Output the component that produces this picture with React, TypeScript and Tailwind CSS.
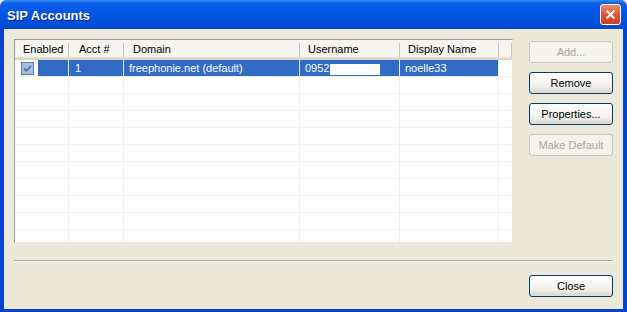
import React from "react";

const cols = [
  { name: "Enabled", w: "w-[54px]", pl: "pl-[8px]" },
  { name: "Acct #", w: "w-[55px]", pl: "pl-[10px]" },
  { name: "Domain", w: "w-[176px]", pl: "pl-[9px]" },
  { name: "Username", w: "w-[100px]", pl: "pl-[8px]" },
  { name: "Display Name", w: "w-[99px]", pl: "pl-[8px]" },
  { name: "", w: "w-[13px]", pl: "pl-0" },
];

function XpButton({ label, disabled }: { label: string; disabled?: boolean }) {
  if (disabled) {
    return (
      <button disabled className="h-[22px] w-[84px] rounded-[3px] border border-[#C9C7BA] bg-[#F5F4EA] text-[11px] text-[#ACA899]">
        {label}
      </button>
    );
  }
  return (
    <button className="h-[22px] w-[84px] rounded-[3px] border border-[#003C74] bg-[linear-gradient(#FFFFFF,#F0F0EA_70%,#D6D0C5)] text-[11px] text-black shadow-[inset_0_-1px_0_#E3E0D2]">
      {label}
    </button>
  );
}

function CheckBox() {
  return (
    <div className="flex h-[13px] w-[13px] items-center justify-center border border-[#5A7EA6] bg-[#A9BFDB]">
      <svg width="9" height="9" viewBox="0 0 9 9">
        <path d="M1 4.5 L3.5 7 L8 1.8" stroke="#3D7BA8" strokeWidth="1.8" fill="none" />
      </svg>
    </div>
  );
}

export default function App() {
  const emptyRows = Array.from({ length: 10 });

  return (
    <div className="h-[312px] w-[627px] overflow-hidden bg-[#ECE9D8]" style={{ fontFamily: '"Liberation Sans", Arial, sans-serif' }}>
      <div className="flex h-full flex-col rounded-t-[7px] bg-[#0842D0]">
        {/* title bar */}
        <div className="flex h-[29px] shrink-0 items-center justify-between rounded-t-[7px] bg-[linear-gradient(#3A8CF9_0%,#0A5FE9_12%,#0256E4_45%,#0050DD_75%,#0047CC_100%)] pl-[7px] pr-[6px]">
          <span className="mt-[2px] text-[13px] font-bold text-white [text-shadow:1px_1px_0_#0A1E8C]">SIP Accounts</span>
          <div className="flex h-[21px] w-[21px] items-center justify-center rounded-[3px] border border-white bg-[linear-gradient(#E98B6B,#DD5632_50%,#C8401E)]">
            <svg width="11" height="11" viewBox="0 0 11 11">
              <path d="M1.5 1.5 L9.5 9.5 M9.5 1.5 L1.5 9.5" stroke="white" strokeWidth="2" />
            </svg>
          </div>
        </div>

        {/* client area */}
        <div className="mx-[4px] mb-[3px] flex flex-1 flex-col bg-[#ECE9D8] pl-[10px] pr-[10px] pt-[10px]">
          <div className="flex gap-[16px]">
            {/* list view */}
            <div className="h-[204px] w-[499px] overflow-hidden border border-[#9A9A9E] border-r-[#ECE9D8] border-b-[#ECE9D8] bg-white text-[11px] text-black">
              <div className="flex h-[20px] border-b border-b-[#D6D2C2] bg-[#F6F5EF] shadow-[inset_0_-2px_0_#E2DECD]">
                {cols.map((c, i) => (
                  <div key={i} className={`${c.w} ${c.pl} relative flex h-full shrink-0 items-center`}>
                    {c.name}
                    <span className="absolute right-0 top-[3px] h-[14px] w-[1px] bg-[#C7C5B2]" />
                  </div>
                ))}
              </div>

              <div className="flex h-[17px] border-b border-b-[#F0F0F0]">
                <div className="flex w-[54px] shrink-0 items-center border-r border-r-[#F0F0F0]">
                  <div className="ml-[6px]">
                    <CheckBox />
                  </div>
                  <div className="ml-[4px] h-full flex-1 bg-[#316AC5]" />
                </div>
                <div className="flex w-[55px] shrink-0 items-center border-r border-r-[#F0F0F0] bg-[#316AC5] pl-[6px] pt-[1px] text-white">1</div>
                <div className="flex w-[176px] shrink-0 items-center border-r border-r-[#F0F0F0] bg-[#316AC5] pl-[5px] pt-[1px] text-white">freephonie.net (default)</div>
                <div className="flex w-[100px] shrink-0 items-center border-r border-r-[#F0F0F0] bg-[#316AC5] pl-[5px] pt-[1px] text-white">
                  0952
                  <span className="ml-[1px] mt-[1px] h-[11px] w-[50px] bg-white" />
                </div>
                <div className="flex w-[99px] shrink-0 items-center border-r border-r-[#F0F0F0] bg-[#316AC5] pl-[5px] pt-[1px] text-white">noelle33</div>
                <div className="w-[13px] shrink-0" />
              </div>

              {emptyRows.map((_, r) => (
                <div key={r} className="flex h-[17px] border-b border-b-[#F0F0F0]">
                  {cols.map((c, i) => (
                    <div key={i} className={`${c.w} h-full shrink-0 ${i < 5 ? "border-r border-r-[#F0F0F0]" : ""}`} />
                  ))}
                </div>
              ))}
            </div>

            {/* buttons */}
            <div className="mt-[2px] flex w-[84px] flex-col gap-[9px]">
              <XpButton label="Add..." disabled />
              <XpButton label="Remove" />
              <XpButton label="Properties..." />
              <XpButton label="Make Default" disabled />
            </div>
          </div>

          <div className="mt-[17px] h-[2px] w-[599px] border-t border-t-[#ACA899] border-b border-b-white" />

          <div className="mt-[13px] flex justify-end">
            <XpButton label="Close" />
          </div>
        </div>
      </div>
    </div>
  );
}
